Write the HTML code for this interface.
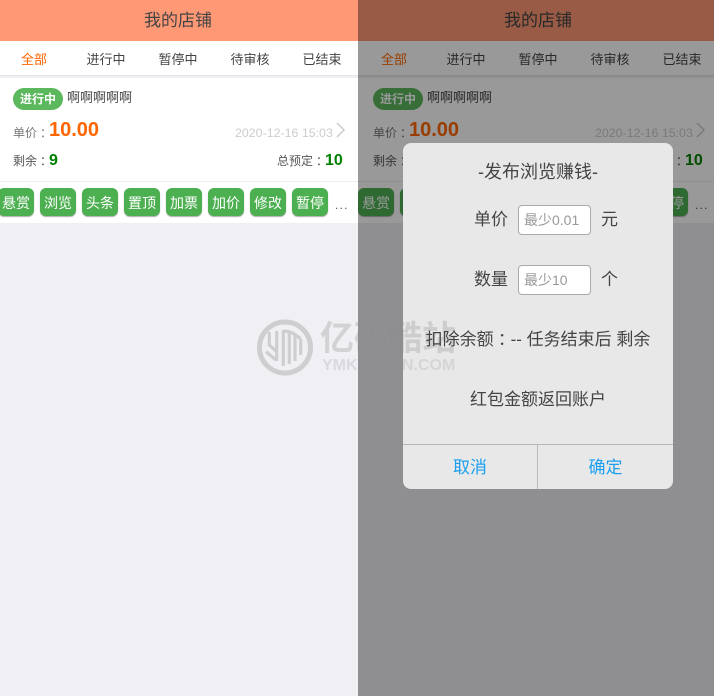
<!DOCTYPE html>
<html lang="zh">
<head>
<meta charset="utf-8">
<style>
html,body{margin:0;padding:0;width:714px;height:696px;overflow:hidden;background:#efeff4;font-family:"Liberation Sans","Noto Sans CJK SC",sans-serif;color:#444}
.a{position:absolute;white-space:nowrap}
.pane{position:absolute;top:0;height:696px;overflow:hidden;background:#efeff4}
.in{position:absolute;top:0;width:360px;height:696px}
.hd{position:absolute;left:-2px;top:0;width:360px;height:41px;background:#ff9875;text-align:center;font-size:17px;line-height:41px;color:#444}
.tabs{position:absolute;left:-2px;top:41px;width:362px;height:34px;background:#fff;border-bottom:1px solid #e6e6ea}
.tabs span{position:absolute;top:0;width:72px;text-align:center;font-size:13px;line-height:37px;color:#444}
.card{position:absolute;left:-2px;top:78px;width:362px;height:145px;background:#fff}
.pill{left:13px;top:88px;width:50px;height:22px;border-radius:11px;background:#5cb85c;color:#fff;font-size:12px;font-weight:bold;line-height:22px;text-align:center}
.btn{position:absolute;top:188px;width:36px;height:28px;border-radius:6px;background:#4caf50;box-shadow:0 1px 1px #aaa;color:#fff;font-size:14px;line-height:30px;text-align:center}
.mask{position:absolute;left:0;top:0;width:356px;height:696px;background:rgba(0,0,0,.4)}
.dlg{position:absolute;left:403px;top:143px;width:270px;height:346px;background:#e8e8e8;border-radius:8px;overflow:hidden;color:#444}
.ipt{position:absolute;left:115px;width:71px;height:28px;border:1px solid #aaa;border-radius:4px;background:#fff;color:#999;font-size:14px;line-height:29px;text-indent:5px}
.c{position:relative;left:.25em}
.l{font-size:17px;line-height:24px}
</style>
</head>
<body>

<div class="pane" style="left:0;width:358px">
<div class="in" style="left:0">
  <div class="hd" style="left:0;width:356px;padding-right:2px">我的店铺</div>
  <div class="tabs"><span style="left:0;color:#ff6600">全部</span><span style="left:72px">进行中</span><span style="left:144px">暂停中</span><span style="left:216px">待审核</span><span style="left:288px">已结束</span></div>
  <div class="card"></div>
  <div class="a pill">进行中</div>
  <div class="a" style="left:67px;top:89px;font-size:13px;line-height:18px;color:#444">啊啊啊啊啊</div>
  <div class="a" style="left:13px;top:124px;font-size:12px;line-height:18px;color:#777">单价<span class="c">：</span></div>
  <div class="a" style="left:49px;top:118px;font-size:20px;font-weight:bold;line-height:24px;color:#ff6600">10.00</div>
  <div class="a" style="left:235px;top:125px;font-size:12.4px;line-height:16px;color:#ccc">2020-12-16 15:03</div>
  <svg class="a" style="left:335px;top:122px" width="12" height="16"><path d="M2 1l7 7-7 7" fill="none" stroke="#ccc" stroke-width="1.5"/></svg>
  <div class="a" style="left:13px;top:152px;font-size:12px;line-height:18px;color:#555">剩余<span class="c">：</span></div>
  <div class="a" style="left:49px;top:151px;font-size:16px;font-weight:bold;line-height:20px;color:#008000">9</div>
  <div class="a" style="left:277px;top:152px;font-size:12px;line-height:18px;color:#555">总预定<span class="c">：</span></div>
  <div class="a" style="left:325px;top:151px;font-size:16px;font-weight:bold;line-height:20px;color:#008000">10</div>
  <div class="a" style="left:0;top:181px;width:360px;height:1px;background:#eee"></div>
  <div class="btn" style="left:-2px">悬赏</div><div class="btn" style="left:40px">浏览</div><div class="btn" style="left:82px">头条</div><div class="btn" style="left:124px">置顶</div><div class="btn" style="left:166px">加票</div><div class="btn" style="left:208px">加价</div><div class="btn" style="left:250px">修改</div><div class="btn" style="left:292px">暂停</div>
  <div class="a" style="left:335px;top:197px;font-size:12px;letter-spacing:1.2px;line-height:16px;color:#555">...</div>
</div>
</div>

<div class="pane" style="left:358px;width:356px">
<div class="in" style="left:2px">
  <div class="hd" style="width:360px">我的店铺</div>
  <div class="tabs"><span style="left:0;color:#ff6600">全部</span><span style="left:72px">进行中</span><span style="left:144px">暂停中</span><span style="left:216px">待审核</span><span style="left:288px">已结束</span></div>
  <div class="card"></div>
  <div class="a pill">进行中</div>
  <div class="a" style="left:67px;top:89px;font-size:13px;line-height:18px;color:#444">啊啊啊啊啊</div>
  <div class="a" style="left:13px;top:124px;font-size:12px;line-height:18px;color:#777">单价<span class="c">：</span></div>
  <div class="a" style="left:49px;top:118px;font-size:20px;font-weight:bold;line-height:24px;color:#ff6600">10.00</div>
  <div class="a" style="left:235px;top:125px;font-size:12.4px;line-height:16px;color:#ccc">2020-12-16 15:03</div>
  <svg class="a" style="left:335px;top:122px" width="12" height="16"><path d="M2 1l7 7-7 7" fill="none" stroke="#ccc" stroke-width="1.5"/></svg>
  <div class="a" style="left:13px;top:152px;font-size:12px;line-height:18px;color:#555">剩余<span class="c">：</span></div>
  <div class="a" style="left:49px;top:151px;font-size:16px;font-weight:bold;line-height:20px;color:#008000">9</div>
  <div class="a" style="left:277px;top:152px;font-size:12px;line-height:18px;color:#555">总预定<span class="c">：</span></div>
  <div class="a" style="left:325px;top:151px;font-size:16px;font-weight:bold;line-height:20px;color:#008000">10</div>
  <div class="a" style="left:-2px;top:181px;width:362px;height:1px;background:#eee"></div>
  <div class="btn" style="left:-2px">悬赏</div><div class="btn" style="left:40px">浏览</div><div class="btn" style="left:82px">头条</div><div class="btn" style="left:124px">置顶</div><div class="btn" style="left:166px">加票</div><div class="btn" style="left:208px">加价</div><div class="btn" style="left:250px">修改</div><div class="btn" style="left:292px">暂停</div>
  <div class="a" style="left:335px;top:197px;font-size:12px;letter-spacing:1.2px;line-height:16px;color:#555">...</div>
</div>
<div class="mask"></div>
</div>

<div class="dlg">
  <div class="a" style="left:0;top:17px;width:270px;text-align:center;font-size:18px;line-height:24px">-发布浏览赚钱-</div>
  <div class="a l" style="left:71px;top:65px">单价</div>
  <div class="ipt" style="top:62px">最少0.01</div>
  <div class="a l" style="left:198px;top:65px">元</div>
  <div class="a l" style="left:71px;top:125px">数量</div>
  <div class="ipt" style="top:122px">最少10</div>
  <div class="a l" style="left:198px;top:125px">个</div>
  <div class="a" style="left:0;top:301px;width:270px;height:1px;background:#b8b8b8"></div>
  <div class="a" style="left:134px;top:301px;width:1px;height:45px;background:#b8b8b8"></div>
  <div class="a" style="left:0;top:302px;width:134px;text-align:center;font-size:17px;line-height:46px;color:#1a9ff0">取消</div>
  <div class="a" style="left:135px;top:302px;width:135px;text-align:center;font-size:17px;line-height:46px;color:#1a9ff0">确定</div>
</div>

<svg class="a" style="left:257px;top:319px" width="58" height="58" viewBox="0 0 58 58">
  <g fill="none" stroke="#909090" opacity=".34">
    <circle cx="28" cy="28.500" r="25.500" stroke-width="5"/>
    <path d="M12.300 13v13l7.400 6.700M19.700 12v30M9 32.700L19 41M26.300 11v36M32.300 13v32M38 15v27M43.700 20v16M26.300 12q9 0 17.400 8" stroke-width="3.200"/>
  </g>
</svg>
<div class="a" style="left:320px;top:320px;font-size:34px;font-weight:bold;line-height:38px;color:rgba(144,144,144,.3)">亿码酷站</div>
<div class="a" style="left:322px;top:357px;font-size:16px;font-weight:bold;line-height:18px;color:rgba(144,144,144,.22)">YMKUZHAN.COM</div>

<div class="a l" style="left:403px;top:328px;width:270px;text-align:center;color:#444">扣除余额<span class="c">：</span>-- 任务结束后 剩余</div>
<div class="a l" style="left:403px;top:388px;width:270px;text-align:center;color:#444">红包金额返回账户</div>

</body>
</html>
